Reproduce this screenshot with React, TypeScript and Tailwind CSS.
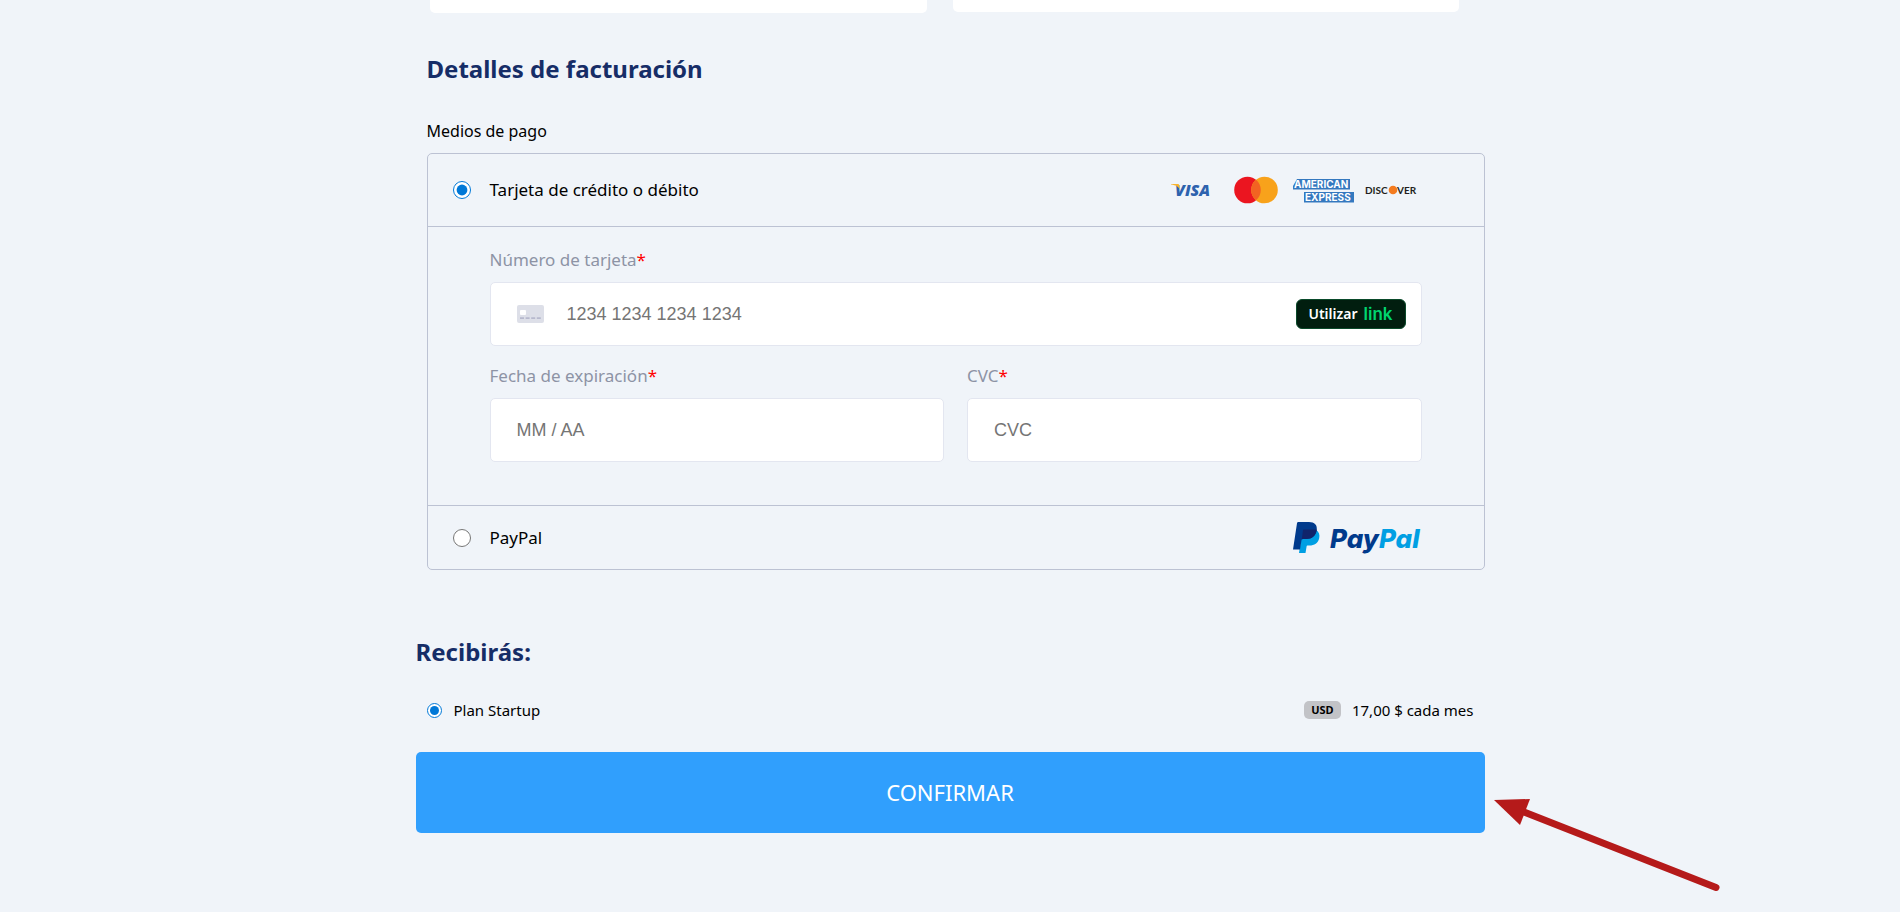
import type { ReactNode } from "react";

const UBUNTU = "font-['Noto_Sans',sans-serif]";

const INPUT =
  "h-16 w-full rounded-[5px] border border-[#e3e6f0] bg-white font-['Liberation_Sans',sans-serif] text-lg text-gray-900 placeholder:text-[#757575] focus:outline-none";

function VisaLogo() {
  return (
    <svg width="48" height="28" viewBox="0 0 48 28" role="img" aria-label="Visa">
      <text
        x="5"
        y="20"
        fontFamily="Open Sans, sans-serif"
        fontWeight="800"
        fontStyle="italic"
        fontSize="16"
        fill="#2d62ae"
      >
        VISA
      </text>
      <path d="M1 8h6.500c1 0 1.600.5 1.800 1.400L10 13C8 10.600 6 9.200 1 8.500z" fill="#f9b32b" />
    </svg>
  );
}

function MastercardLogo() {
  return (
    <svg width="44" height="28" viewBox="0 0 44 28" role="img" aria-label="Mastercard">
      <circle cx="13.5" cy="14" r="13.3" fill="#eb1520" />
      <circle cx="30.5" cy="14" r="13.3" fill="#f8a21b" />
      <path d="M22 3.800a13.300 13.300 0 0 1 0 20.400a13.300 13.300 0 0 1 0-20.400z" fill="#f26322" />
    </svg>
  );
}

function AmexLogo() {
  return (
    <svg width="62" height="28" viewBox="0 0 62 28" role="img" aria-label="American Express">
      <path d="M4 3h53v10.500H0V10z" fill="#3478bf" />
      <path d="M11 16h50v10.500H11z" fill="#3478bf" />
      <g fontFamily="Inter, sans-serif" fontWeight="700" fontSize="10" fill="#fff">
        <text x="1" y="12">AMERICAN</text>
        <text x="12" y="25">EXPRESS</text>
      </g>
    </svg>
  );
}

function DiscoverLogo() {
  return (
    <svg width="57" height="28" viewBox="0 0 57 28" role="img" aria-label="Discover">
      <g fontFamily="Lato, sans-serif" fontWeight="700" fontSize="10" fill="#231f20">
        <text x="0" y="18">DISC</text>
        <text x="32" y="18">VER</text>
      </g>
      <circle cx="28" cy="14" r="4.3" fill="#f47b20" />
    </svg>
  );
}

function PaypalLogo() {
  return (
    <svg width="130" height="34" viewBox="0 0 130 34" role="img" aria-label="PayPal">
      <path
        d="M23 9c3 1.800 4 4.600 3.200 8.200-1.200 5-4.700 7.300-9.900 7.300h-1.600c-.7 0-1 .4-1.100 1L12.500 32H6l2.500-16L12 9z"
        fill="#009fe3"
      />
      <path
        d="M5.500 1H16c5.500 0 8.600 3 7.700 8.300-.9 5.700-4.700 8.700-10.700 8.700h-3c-.9 0-1.300.5-1.500 1.300L7 28.500H0L4 2.300C4.200 1.500 4.700 1 5.500 1z"
        fill="#003a8c"
      />
      <path
        d="M10.500 8.500H23.800c-.8 6.200-4.600 9.500-10.800 9.500h-3c-.5 0-.9.200-1.200.6L10 9z"
        fill="#10246b"
      />
      <g fontFamily="Inter, sans-serif" fontWeight="800" fontStyle="italic" fontSize="26">
        <text x="37" y="27">
          <tspan fill="#003a8c">Pay</tspan>
          <tspan fill="#009fe3">Pal</tspan>
        </text>
      </g>
    </svg>
  );
}

function CardGlyph() {
  return (
    <svg width="27" height="18" viewBox="0 0 27 18" aria-hidden="true">
      <rect width="27" height="18" rx="2" fill="#dddfe8" />
      <rect x="3" y="5" width="6" height="5" rx="1" fill="#fff" />
      <path d="M3 13.200h21" stroke="#b7b9cd" strokeWidth="1.800" strokeDasharray="4 1.600" />
    </svg>
  );
}

function FieldLabel({ htmlFor, children }: { htmlFor: string; children: ReactNode }) {
  return (
    <label htmlFor={htmlFor} className="block text-[17px] leading-6 text-[#8d93a5]">
      {children}
      <span className="text-[#ff0000]">*</span>
    </label>
  );
}

// Hand-drawn pointer at the confirm button
function Pointer() {
  return (
    <svg
      className="pointer-events-none absolute left-full top-10 ml-2"
      width="230"
      height="104"
      viewBox="0 0 230 104"
      aria-hidden="true"
    >
      <path d="M31 20L223 95.500" stroke="#b51a1a" strokeWidth="7" strokeLinecap="round" />
      <path d="M1 8L37 7L27 33z" fill="#b51a1a" />
    </svg>
  );
}

export default function App() {
  return (
    <div className={`min-h-screen overflow-hidden bg-[#f0f4f9] text-black ${UBUNTU}`}>
      <main className="mx-auto w-full max-w-[1069px]">
        <div className="grid grid-cols-[498fr_506fr] items-start gap-[26px] pl-[14px] pr-[26px]">
          <div className="h-[13px] rounded-b-[5px] bg-white" />
          <div className="h-3 rounded-b-[5px] bg-white" />
        </div>

        <form onSubmit={(e) => e.preventDefault()}>
          <section className="pl-[11px]">
            <h2 className="mt-10 text-2xl leading-8 font-bold text-[#162d67]">
              Detalles de facturación
            </h2>
            <p className="mt-[34px] text-base leading-6">Medios de pago</p>

            <div className="mt-[10px] rounded-[5px] border border-[#bcc2d3]">
              <div className="flex h-[72px] items-center justify-between pr-[62px] pl-[25px]">
                <label className="flex items-center gap-[19px] text-[17px] leading-6">
                  <input
                    type="radio"
                    name="method"
                    defaultChecked
                    className="size-[18px] accent-[#0078d7]"
                  />
                  Tarjeta de crédito o débito
                </label>
                <div className="flex items-center">
                  <VisaLogo />
                  <span className="ml-4 flex"><MastercardLogo /></span>
                  <span className="ml-[15px] flex"><AmexLogo /></span>
                  <span className="ml-[10px] flex"><DiscoverLogo /></span>
                </div>
              </div>

              <div className="border-y border-[#bcc2d3] px-[62px] pt-[21px] pb-[43px]">
                <FieldLabel htmlFor="number">Número de tarjeta</FieldLabel>
                <div className="relative mt-[10px]">
                  <input
                    id="number"
                    type="text"
                    placeholder="1234 1234 1234 1234"
                    className={`${INPUT} pr-32 pl-[76px]`}
                  />
                  <span className="pointer-events-none absolute inset-y-0 left-[27px] flex items-center">
                    <CardGlyph />
                  </span>
                  <span className="absolute inset-y-0 right-4 flex items-center">
                    <button
                      type="button"
                      className="flex h-[30px] w-[110px] items-center justify-center gap-[6px] rounded-md border border-[#0a4a2a] bg-[#011e0f] text-sm font-semibold text-white"
                    >
                      Utilizar
                      <span className="font-['Inter',sans-serif] text-[17px] font-semibold text-[#00d66f]">
                        link
                      </span>
                    </button>
                  </span>
                </div>

                <div className="mt-[18px] grid grid-cols-2 gap-[23px]">
                  <div>
                    <FieldLabel htmlFor="expiry">Fecha de expiración</FieldLabel>
                    <input
                      id="expiry"
                      type="text"
                      placeholder="MM / AA"
                      className={`${INPUT} mt-[10px] px-[26px]`}
                    />
                  </div>
                  <div>
                    <FieldLabel htmlFor="cvc">CVC</FieldLabel>
                    <input
                      id="cvc"
                      type="text"
                      placeholder="CVC"
                      className={`${INPUT} mt-[10px] px-[26px]`}
                    />
                  </div>
                </div>
              </div>

              <div className="flex h-[63px] items-center justify-between pr-[61px] pl-[25px]">
                <label className="flex items-center gap-[19px] text-[17px] leading-6">
                  <input type="radio" name="method" className="size-[18px] accent-[#0078d7]" />
                  PayPal
                </label>
                <PaypalLogo />
              </div>
            </div>
          </section>

          <section className="mt-[66px]">
            <h2 className="text-2xl leading-8 font-bold text-[#162d67]">Recibirás:</h2>
            <div className="mt-[30px] flex items-center justify-between pr-[11px] pl-[11px] text-[15px] leading-6">
              <label className="flex items-center gap-3">
                <input
                  type="radio"
                  name="plan"
                  defaultChecked
                  className="size-[15px] accent-[#0078d7]"
                />
                Plan Startup
              </label>
              <div className="flex items-center gap-[11px]">
                <span className="flex h-[18px] w-[37px] items-center justify-center rounded-[5px] bg-[#c2c3c7] text-[11px] font-bold">
                  USD
                </span>
                <span>17,00 $ cada mes</span>
              </div>
            </div>
            <div className="relative mt-[30px]">
              <button
                type="submit"
                className="h-[81px] w-full rounded-[5px] bg-[#309ffd] text-[22px] text-white"
              >
                CONFIRMAR
              </button>
              <Pointer />
            </div>
          </section>
        </form>
      </main>
    </div>
  );
}
